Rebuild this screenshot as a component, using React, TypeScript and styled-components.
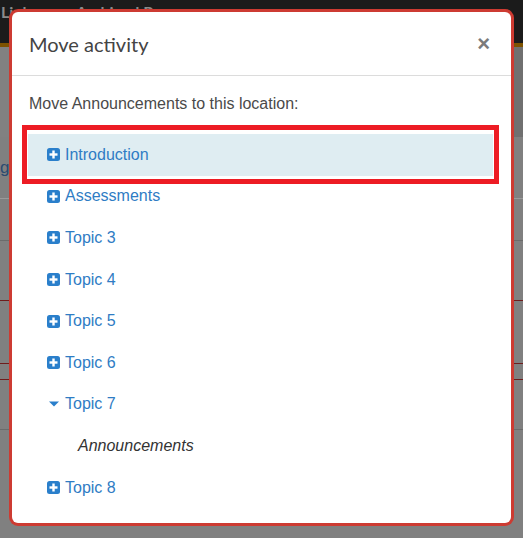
import * as React from "react";
import styled, { createGlobalStyle } from "styled-components";

const GlobalStyle = createGlobalStyle`
  html, body {
    margin: 0;
    padding: 0;
    background: #808080;
    overflow: hidden;
  }
  * {
    box-sizing: border-box;
  }
`;

const Screen = styled.div`
  position: relative;
  width: 523px;
  height: 538px;
  overflow: hidden;
  font-family: "Liberation Sans", Arial, sans-serif;
`;

/* page behind the dimmed backdrop */
const NavBar = styled.div`
  height: 43px;
  background: #1b1b1b;
  display: flex;
  gap: 26px;
  padding: 3px 0 0 1px;
  font-family: Lato, sans-serif;
  font-weight: bold;
  font-size: 16px;
  line-height: 18px;
  color: #8a8a8a;
  white-space: nowrap;
`;

const Stripe = styled.div`
  height: 4px;
  background: #7d5200;
`;

const Band = styled.div`
  height: 90px;
  display: flex;
`;

const BandHalf = styled.div<{ tone: string }>`
  flex: 1;
  background: ${(p) => p.tone};
`;

const PageRow = styled.div<{ h: number; line: string }>`
  height: ${(p) => p.h}px;
  border-bottom: 1px solid ${(p) => p.line};
  display: flex;
  align-items: center;
  font-size: 17px;
  color: #2b4b70;
`;

/* modal */
const Modal = styled.div`
  position: absolute;
  top: 12px;
  left: 12px;
  width: 499px;
  background: #fff;
  border-radius: 6px;
  box-shadow: 0 0 0 3px #cd3b32;
`;

const Header = styled.div`
  height: 64px;
  border-bottom: 1px solid #dcdcdc;
  display: flex;
  align-items: center;
  justify-content: space-between;
  padding: 0 21px 0 17px;
`;

const Title = styled.h3`
  margin: 0;
  font-family: Lato, sans-serif;
  font-weight: normal;
  font-size: 20px;
  color: #444;
`;

const Close = styled.span`
  font-family: "Liberation Sans", Arial, sans-serif;
  font-weight: bold;
  font-size: 22px;
  line-height: 1;
  color: #7b7b7b;
`;

const Body = styled.div`
  padding: 18px 18px 15px 16px;
`;

const Prompt = styled.div`
  padding-left: 1px;
  font-size: 16px;
  line-height: 20px;
  color: #4a4a4a;
  margin-bottom: 20px;
`;

const List = styled.ul`
  list-style: none;
  margin: 0;
  padding: 0;
`;

const Item = styled.li<{ selected?: boolean; child?: boolean }>`
  position: relative;
  height: 41.6px;
  display: flex;
  align-items: center;
  gap: 5px;
  padding-left: ${(p) => (p.child ? 50 : 19)}px;
  background: ${(p) => (p.selected ? "#dfedf2" : "transparent")};
  font-size: 16px;
`;

const Link = styled.a`
  color: #2f7cc4;
  text-decoration: none;
`;

const Activity = styled.span`
  font-style: italic;
  color: #333;
`;

const Annotation = styled.div`
  position: absolute;
  top: -9px;
  bottom: -8px;
  left: -6px;
  right: -6px;
  border: 5px solid #ed1c24;
  pointer-events: none;
`;

const IconSlot = styled.span`
  width: 13px;
  height: 13px;
  display: inline-flex;
  align-items: center;
  justify-content: center;
  flex: none;
`;

const Expand = () => (
  <IconSlot>
    <svg width="13" height="13" viewBox="0 0 13 13">
      <rect width="13" height="13" rx="2.5" fill="#2a7fcb" />
      <rect x="5.3" y="2.5" width="2.4" height="8" fill="#fff" />
      <rect x="2.5" y="5.3" width="8" height="2.4" fill="#fff" />
    </svg>
  </IconSlot>
);

const Collapse = () => (
  <IconSlot>
    <svg width="10" height="6" viewBox="0 0 10 6">
      <path d="M0 0.5h10L5 5.5z" fill="#2a7fcb" />
    </svg>
  </IconSlot>
);

const sections = [
  "Introduction",
  "Assessments",
  "Topic 3",
  "Topic 4",
  "Topic 5",
  "Topic 6",
];

export default function App() {
  return (
    <Screen>
      <GlobalStyle />
      <NavBar>
        <span>Links ▾</span>
        <span>Archived Papers ▾</span>
      </NavBar>
      <Stripe />
      <Band>
        <BandHalf tone="#818181" />
        <BandHalf tone="#707070" />
      </Band>
      <PageRow h={62} line="#9a9a9a">gs</PageRow>
      <PageRow h={42} line="#6b6b6b" />
      <PageRow h={60} line="#6f1d1d" />
      <PageRow h={63} line="#6f1d1d" />
      <PageRow h={16} line="#6f1d1d" />
      <PageRow h={50} line="#6b6b6b" />

      <Modal>
        <Header>
          <Title>Move activity</Title>
          <Close>×</Close>
        </Header>
        <Body>
          <Prompt>Move Announcements to this location:</Prompt>
          <List>
            {sections.map((name, i) => (
              <Item key={name} selected={i === 0}>
                <Expand />
                <Link href="#">{name}</Link>
                {i === 0 && <Annotation />}
              </Item>
            ))}
            <Item>
              <Collapse />
              <Link href="#">Topic 7</Link>
            </Item>
            <Item child>
              <Activity>Announcements</Activity>
            </Item>
            <Item>
              <Expand />
              <Link href="#">Topic 8</Link>
            </Item>
          </List>
        </Body>
      </Modal>
    </Screen>
  );
}
